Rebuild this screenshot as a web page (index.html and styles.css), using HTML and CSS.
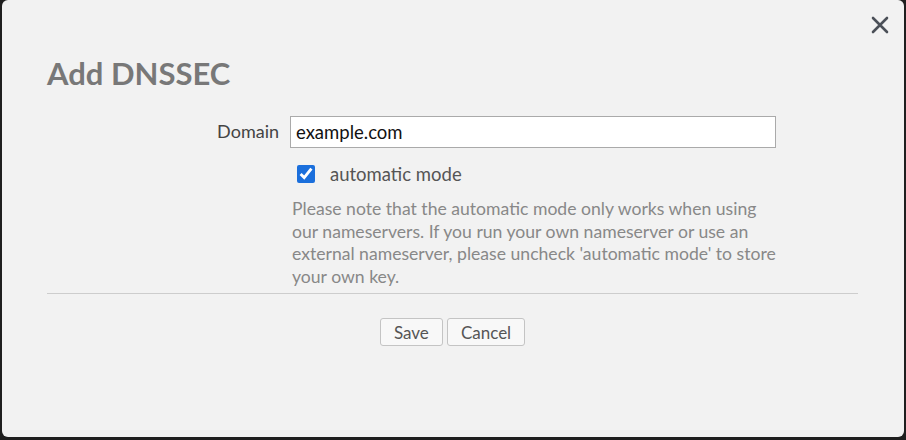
FILE: index.html
```html
<!DOCTYPE html>
<html lang="en">
<head>
    <meta charset="UTF-8">
    <meta name="viewport" content="width=device-width, initial-scale=1.0">
    <title>Add DNSSEC</title>
    <link rel="stylesheet" href="styles.css">
</head>
<body>
    <div class="modal">
        <button class="close" aria-label="Close">
            <svg width="18" height="18" viewBox="0 0 18 18">
                <path d="M2 2 L16 16 M16 2 L2 16" stroke="#4b5058" stroke-width="2.6" stroke-linecap="round" fill="none"/>
            </svg>
        </button>

        <h2 class="title">Add DNSSEC</h2>

        <!-- 表单区域 -->
        <form class="form">
            <div class="row">
                <label class="label" for="domain">Domain</label>
                <input id="domain" class="input" type="text" value="example.com">
            </div>
            <div class="row">
                <span></span>
                <div class="field">
                    <label class="check">
                        <input type="checkbox" checked>
                        <span>automatic mode</span>
                    </label>
                    <p class="help">Please note that the automatic mode only works when using our nameservers. If you run your own nameserver or use an external nameserver, please uncheck 'automatic mode' to store your own key.</p>
                </div>
            </div>
        </form>

        <hr class="divider">

        <div class="actions">
            <button class="btn">Save</button>
            <button class="btn">Cancel</button>
        </div>
    </div>
</body>
</html>
```

FILE: styles.css
```css
/* 背景遮罩 */
body, html {
    margin: 0;
    height: 100%;
    background-color: #1f1f1f;
    font-family: Lato, "Open Sans", sans-serif;
}

/* 对话框 */
.modal {
    position: relative;
    box-sizing: border-box;
    height: 437px;
    margin: 0 2px;
    padding: 55px 46px 0 45px;
    background-color: #f2f2f2;
    border-radius: 6px;
}

.close {
    position: absolute;
    top: 16px;
    right: 15px;
    padding: 0;
    border: none;
    background: none;
    cursor: pointer;
}

.title {
    margin: 0 0 25px 0;
    font-size: 31px;
    line-height: 36px;
    font-weight: 700;
    color: #787878;
}

/* 表单 */
.row {
    display: grid;
    grid-template-columns: 232px 486px;
    column-gap: 11px;
}

.label {
    text-align: right;
    font-size: 18px;
    color: #444;
    line-height: 31px;
}

.input {
    box-sizing: border-box;
    height: 32px;
    padding: 0 5px;
    border: 1px solid #aaa;
    background: #fff;
    font-family: Lato, sans-serif;
    font-size: 18.5px;
    color: #111;
    outline: none;
}

.check {
    display: flex;
    align-items: center;
    gap: 15px;
    margin: 15px 0 0 7px;
    font-size: 18.5px;
    color: #555;
}

.check input {
    width: 18px;
    height: 18px;
    margin: 0;
    accent-color: #1b6fdc;
}

.help {
    margin: 13px 0 0 2px;
    font-size: 17.6px;
    line-height: 22.5px;
    color: #888;
}

.divider {
    margin: 5px 0 0 0;
    border: none;
    border-top: 1px solid #cdcdcd;
}

/* 按钮 */
.actions {
    margin-top: 24px;
    text-align: center;
}

.btn {
    height: 28px;
    padding: 0 13px;
    font-family: Lato, sans-serif;
    font-size: 17px;
    color: #555;
    background-color: #f8f8f8;
    border: 1px solid #c4c4c4;
    border-radius: 3px;
    cursor: pointer;
}
```
